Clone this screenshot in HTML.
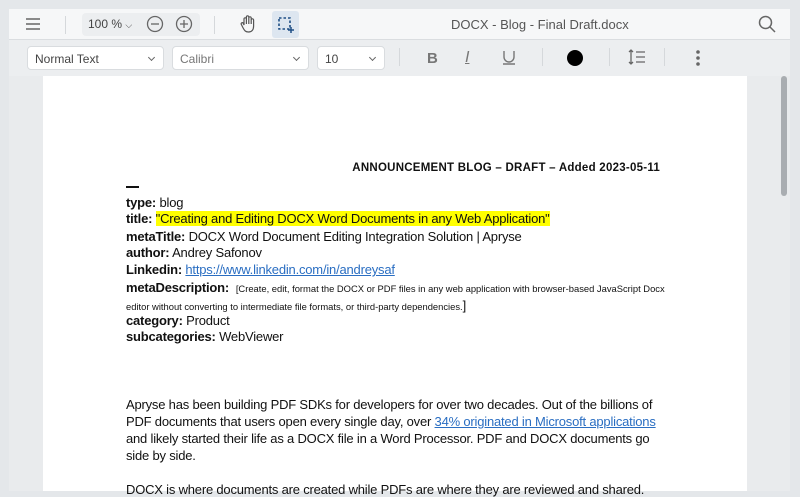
<!DOCTYPE html>
<html><head><style>
*{margin:0;padding:0;box-sizing:border-box}
body{width:800px;height:491px;overflow:hidden;background:#e4e7ea;font-family:"Liberation Sans",sans-serif;position:relative}
.top{position:absolute;left:9px;top:9px;width:781px;height:31px;background:#f6f7f8;border-bottom:1px solid #dadde0}
.tb{position:absolute;left:9px;top:40px;width:781px;height:36px;background:#eceef0}
.doc{position:absolute;left:9px;top:76px;width:781px;height:415px;background:#e9ebed}
.page{position:absolute;left:43px;top:76px;width:704px;height:415px;background:#fff}
.sb{position:absolute;left:781px;top:76px;width:6px;height:120px;background:#a9adb1;border-radius:3px}
.ab{position:absolute;color:#555}
.dd{position:absolute;top:46px;height:24px;background:#fff;border:1px solid #d9dcdf;border-radius:4px;font-size:12px;color:#444;padding:5px 7px}
.dd:after{content:"";position:absolute;right:9px;top:8px;width:4px;height:4px;border-right:1.3px solid #666;border-bottom:1.3px solid #666;transform:rotate(45deg)}
.t{position:absolute;left:126px;font-size:13px;color:#111;white-space:nowrap;letter-spacing:-0.2px}
.t b{font-weight:bold}
a{color:#2a6ec2;text-decoration:underline}
.sep{position:absolute;top:16px;width:1px;height:18px;background:#d5d8db}
</style></head><body>
<div class="top"></div><div class="tb"></div><div class="doc"></div><div class="page"></div><div class="sb"></div>
<svg class="ab" style="left:25px;top:17px" width="16" height="14"><path d="M1 2h14M1 7h14M1 12h14" stroke="#666" stroke-width="1.5"/></svg>
<div class="sep" style="left:65px"></div>
<div style="position:absolute;left:82px;top:13px;width:118px;height:23px;background:#eceef0;border-radius:4px"></div>
<div class="ab" style="left:88px;top:17px;font-size:12px;color:#444">100 % <span style="font-size:9px">⌵</span></div>
<svg class="ab" style="left:146px;top:15px" width="18" height="18"><circle cx="9" cy="9" r="7.5" fill="none" stroke="#666" stroke-width="1.3"/><path d="M5 9h8" stroke="#666" stroke-width="1.3"/></svg>
<svg class="ab" style="left:175px;top:15px" width="18" height="18"><circle cx="9" cy="9" r="7.5" fill="none" stroke="#666" stroke-width="1.3"/><path d="M5 9h8M9 5v8" stroke="#666" stroke-width="1.3"/></svg>
<div class="sep" style="left:214px"></div>
<svg class="ab" style="left:239px;top:14px" width="18" height="20"><path d="M5 11V5a1.2 1.2 0 0 1 2.4 0v5V3a1.2 1.2 0 0 1 2.4 0v7V4a1.2 1.2 0 0 1 2.4 0v6V6a1.2 1.2 0 0 1 2.4 0v6c0 4-2 6-5 6s-4-1-6-5l-1.5-3a1.2 1.2 0 0 1 2-1z" fill="none" stroke="#555" stroke-width="1.2"/></svg>
<div style="position:absolute;left:272px;top:11px;width:27px;height:27px;background:#dde6f0;border-radius:3px"></div>
<svg class="ab" style="left:278px;top:17px" width="16" height="16"><rect x="1" y="1" width="11" height="11" fill="none" stroke="#1e4f85" stroke-width="1.6" stroke-dasharray="2.5 2"/><path d="M13 10v6M10 13h6" stroke="#1e4f85" stroke-width="1.5"/></svg>
<div class="ab" style="left:451px;top:17px;font-size:13px;color:#555">DOCX - Blog - Final Draft.docx</div>
<svg class="ab" style="left:758px;top:15px" width="18" height="18"><circle cx="7.5" cy="7.5" r="6" fill="none" stroke="#666" stroke-width="1.5"/><path d="M12 12l5 5" stroke="#666" stroke-width="1.5"/></svg>
<div class="dd" style="left:27px;width:137px">Normal Text</div>
<div class="dd" style="left:172px;width:137px;color:#777">Calibri</div>
<div class="dd" style="left:317px;width:68px">10</div>
<div class="sep" style="left:399px;top:48px"></div>
<div class="ab" style="left:427px;top:50px;font-size:15px;font-weight:bold;color:#777">B</div>
<div class="ab" style="left:465px;top:49px;font-size:16px;font-style:italic;color:#777;text-decoration:underline">I</div>
<svg class="ab" style="left:502px;top:50px" width="14" height="16"><path d="M2 1v6a5 5 0 0 0 10 0V1M1 14h12" fill="none" stroke="#777" stroke-width="1.4"/></svg>
<div class="sep" style="left:542px;top:48px"></div>
<div style="position:absolute;left:567px;top:50px;width:16px;height:16px;border-radius:50%;background:#000"></div>
<div class="sep" style="left:609px;top:48px"></div>
<svg class="ab" style="left:628px;top:49px" width="18" height="16"><path d="M3 1v14M1 3l2-2 2 2M1 13l2 2 2-2M8 3h9M8 8h9M8 13h9" fill="none" stroke="#666" stroke-width="1.3"/></svg>
<div class="sep" style="left:664px;top:48px"></div>
<svg class="ab" style="left:695px;top:49px" width="6" height="18"><circle cx="3" cy="3" r="1.8" fill="#666"/><circle cx="3" cy="9" r="1.8" fill="#666"/><circle cx="3" cy="15" r="1.8" fill="#666"/></svg>
<div class="t" style="left:auto;right:140px;top:162px;font-size:11.5px;font-weight:bold;letter-spacing:0.25px">ANNOUNCEMENT BLOG – DRAFT – Added 2023-05-11</div>
<div style="position:absolute;left:126px;top:186px;width:13px;height:2px;background:#111"></div>
<div class="t" style="top:195px"><b>type:</b> blog</div>
<div class="t" style="top:211px"><b>title:</b> <span style="background:#ffff00">"Creating and Editing DOCX Word Documents in any Web Application"</span></div>
<div class="t" style="top:229px"><b>metaTitle:</b> DOCX Word Document Editing Integration Solution | Apryse</div>
<div class="t" style="top:245px"><b>author:</b> Andrey Safonov</div>
<div class="t" style="top:262px"><b>Linkedin:</b> <a>https://www.linkedin.com/in/andreysaf</a></div>
<div class="t" style="top:280px"><b>metaDescription:</b> &nbsp;<span style="font-size:9.4px;letter-spacing:0">[Create, edit, format the DOCX or PDF files in any web application with browser-based JavaScript Docx</span></div>
<div class="t" style="top:298px;font-size:9.4px;letter-spacing:0">editor without converting to intermediate file formats, or third-party dependencies.<span style="font-size:13px">]</span></div>
<div class="t" style="top:313px"><b>category:</b> Product</div>
<div class="t" style="top:329px"><b>subcategories:</b> WebViewer</div>
<div class="t" style="top:397px">Apryse has been building PDF SDKs for developers for over two decades. Out of the billions of</div>
<div class="t" style="top:414px">PDF documents that users open every single day, over <a>34% originated in Microsoft applications</a></div>
<div class="t" style="top:431px">and likely started their life as a DOCX file in a Word Processor. PDF and DOCX documents go</div>
<div class="t" style="top:448px">side by side.</div>
<div class="t" style="top:482px">DOCX is where documents are created while PDFs are where they are reviewed and shared.</div>
</body></html>
